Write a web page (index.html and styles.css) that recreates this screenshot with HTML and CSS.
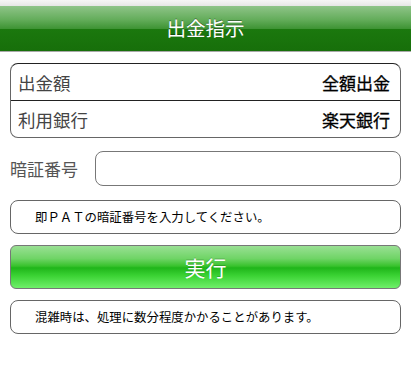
FILE: index.html
```html
<!DOCTYPE html>
<html lang="ja">
<head>
<meta charset="utf-8">
<title>出金指示</title>
<link rel="stylesheet" href="styles.css">
</head>
<body>
<div class="topbar"></div>
<header class="header">出金指示</header>
<main class="content">
  <div class="table">
    <div class="row">
      <span class="label">出金額</span>
      <span class="value">全額出金</span>
    </div>
    <div class="row">
      <span class="label">利用銀行</span>
      <span class="value">楽天銀行</span>
    </div>
  </div>
  <div class="pin">
    <span class="pin-label">暗証番号</span>
    <input class="pin-input" type="password">
  </div>
  <div class="notice">即ＰＡＴの暗証番号を入力してください。</div>
  <button class="exec">実行</button>
  <div class="notice notice-last">混雑時は、処理に数分程度かかることがあります。</div>
</main>
</body>
</html>
```

FILE: styles.css
```css
html, body {
  margin: 0;
  padding: 0;
  background: #fff;
  font-family: "Noto Sans CJK JP", "Noto Sans", sans-serif;
}
.topbar {
  height: 6px;
  background: linear-gradient(#f6f6f6, #e6e6e6);
}
.header {
  height: 45px;
  line-height: 44px;
  text-align: center;
  color: #fff;
  font-size: 19.5px;
  text-shadow: 0 -1px 0 rgba(0,0,0,0.35);
  background: linear-gradient(#8fc489 0%, #64ad5b 30%, #3f9435 50%, #1b780e 51%, #176f0a 100%);
  border-bottom: 1px solid #a9a9a9;
}
.content {
  padding: 11px 10px 0;
  display: flex;
  flex-direction: column;
}
.table {
  border: 1px solid #666;
  border-top-color: #222;
  border-radius: 8px;
  overflow: hidden;
}
.row {
  height: 36px;
  display: flex;
  align-items: center;
  justify-content: space-between;
  padding: 0 10px 0 7px;
}
.row + .row {
  border-top: 1px solid #222;
}
.label {
  font-size: 17.5px;
  color: #444;
}
.value {
  font-size: 17px;
  color: #000;
  -webkit-text-stroke: 0.3px #000;
}
.pin {
  margin-top: 13px;
  display: flex;
  align-items: center;
}
.pin-label {
  width: 85px;
  font-size: 17px;
  color: #555;
}
.pin-input {
  flex: 1;
  height: 35px;
  box-sizing: border-box;
  margin: 0;
  border: 1px solid #777;
  border-radius: 8px;
  background: #fff;
  outline: none;
}
.notice {
  margin-top: 14px;
  height: 34px;
  box-sizing: border-box;
  border: 1px solid #666;
  border-radius: 8px;
  padding-left: 24px;
  display: flex;
  align-items: center;
  font-size: 12.4px;
  color: #000;
}
.notice-last {
  margin-top: 11px;
}
.exec {
  margin-top: 11px;
  height: 44px;
  border: 1px solid #777;
  border-radius: 6px;
  color: #fff;
  font-family: inherit;
  font-size: 21px;
  text-shadow: 0 -1px 0 rgba(0,0,0,0.2);
  background: linear-gradient(#9ae094 0%, #6fd466 30%, #37c22c 48%, #1fb51a 52%, #3ad233 70%, #6ff06a 100%);
  padding: 0;
}
```
